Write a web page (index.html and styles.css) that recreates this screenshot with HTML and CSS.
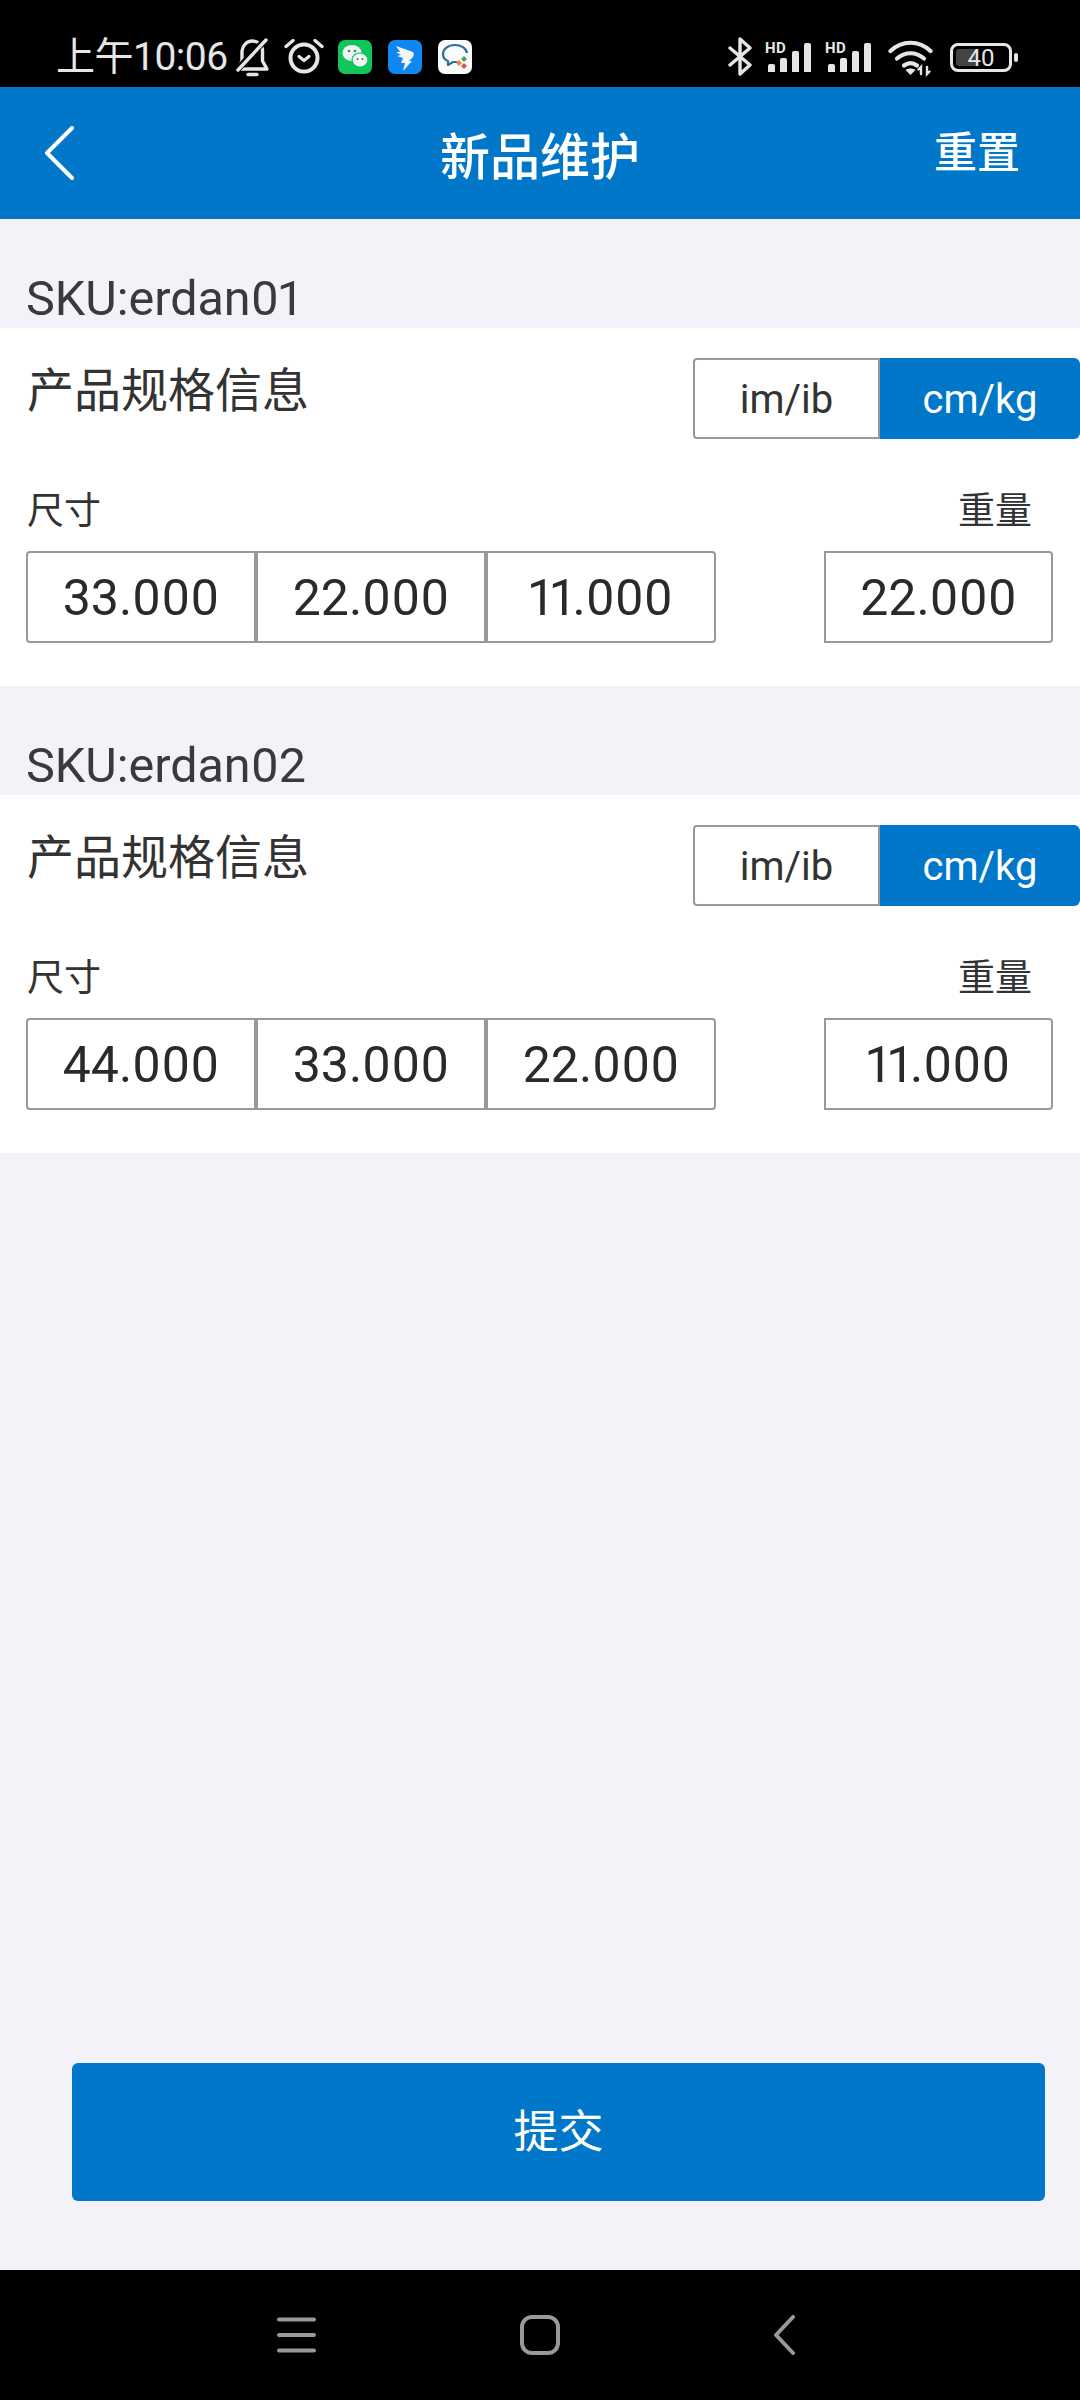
FILE: index.html
```html
<!DOCTYPE html>
<html lang="zh-CN">
<head>
<meta charset="utf-8">
<title>新品维护</title>
<link rel="stylesheet" href="styles.css">
</head>
<body>
<div class="phone">
  <div class="status">
    <span class="time">上午10:06</span>
    <svg class="i-bell" width="33" height="40" viewBox="0 0 33 40" fill="none" stroke="#e6e6e6" stroke-width="3.4" stroke-linecap="round" stroke-linejoin="round">
      <path d="M2 32h29l-4.500-8V14C26.500 8 22 4 16.500 4 11 4 7 8 6 14v10z"/>
      <path d="M1 33L30 2" stroke="#000" stroke-width="6.500"/>
      <path d="M2 33L30 3"/>
      <path d="M12 37.500h9"/>
    </svg>
    <svg class="i-alarm" width="40" height="40" viewBox="0 0 40 40" fill="none" stroke="#e6e6e6" stroke-linecap="round" stroke-linejoin="round">
      <circle cx="20" cy="21" r="13.500" stroke-width="4"/>
      <path d="M2 9.500L9 3.500M38 9.500L31 3.500" stroke-width="3.400"/>
      <path d="M15 19.500l5 4 5-4" stroke-width="3.200"/>
    </svg>
    <svg class="i-app first" width="34" height="40" viewBox="0 0 34 40">
      <rect y="3" width="34" height="34" rx="7" fill="#10c55c"/>
      <ellipse cx="14" cy="16" rx="9.500" ry="8" fill="#f4f4f4"/>
      <ellipse cx="22" cy="23" rx="8" ry="7" fill="#f4f4f4" stroke="#10c55c" stroke-width="1.200"/>
      <circle cx="11" cy="14" r="1.300" fill="#3a8a5c"/><circle cx="17" cy="14" r="1.300" fill="#3a8a5c"/>
      <circle cx="19.500" cy="22" r="1.100" fill="#3a8a5c"/><circle cx="24.500" cy="22" r="1.100" fill="#3a8a5c"/>
    </svg>
    <svg class="i-app" width="34" height="40" viewBox="0 0 34 40">
      <rect y="3" width="34" height="34" rx="7" fill="#0f86f0"/>
      <path d="M8 9l17 6c1 1 1 3 0 5l-4 4h3l-9 10 2-8h-4l2-5-6-2 4-1-5-3 4 0z" fill="#f2f6fb"/>
    </svg>
    <svg class="i-app" width="34" height="40" viewBox="0 0 34 40">
      <rect y="3" width="34" height="34" rx="7" fill="#fbfbfb"/>
      <path d="M17 8C10 8 5 12 5 17c0 3 2 6 5 7v4l5-3h4" fill="none" stroke="#2d6f9f" stroke-width="2.200" stroke-linejoin="round"/>
      <path d="M17 8c6 0 11 3 12 8" fill="none" stroke="#2d6f9f" stroke-width="2.200"/>
      <path d="M26 19l3 3-3 3-3-3z" fill="#4aa564"/><path d="M21 23l3 3-3 3-3-3z" fill="#e88a3a"/><path d="M26 26l3 3-3 3-3-3z" fill="#d9534f"/>
    </svg>
    <span class="spacer"></span>
    <svg width="25" height="40" viewBox="0 0 25 40" fill="none" stroke="#e6e6e6" stroke-width="3.400" stroke-linecap="round" stroke-linejoin="round">
      <path d="M2 11l20 17-10 9V2l10 9L2 28"/>
    </svg>
    <div class="signal">
      <span class="hd">HD</span>
      <span class="bars"><i class="b1"></i><i class="b2"></i><i class="b3"></i><i class="b4"></i></span>
    </div>
    <div class="signal">
      <span class="hd">HD</span>
      <span class="bars"><i class="b1"></i><i class="b2"></i><i class="b3"></i><i class="b4"></i></span>
    </div>
    <svg class="i-wifi" width="45" height="40" viewBox="0 0 45 40" fill="none" stroke="#e6e6e6" stroke-width="4.200" stroke-linecap="round">
      <path d="M2.500 14C14 3 31 3 42.500 14"/>
      <path d="M9 21.500c8-7 19-7 27 0"/>
      <path d="M16 28.500c4-3 9-3 13 0"/>
      <path d="M22.500 38l-5-5c3-2 7-2 10 0z" fill="#e6e6e6" stroke="none"/>
      <path d="M33 37v-7l-2.500 2.500M39 30v7l2.500-2.500" stroke-width="2.400"/>
    </svg>
    <div class="battery">
      <div class="cell"><span class="level"></span><span class="pct">40</span></div>
      <span class="tip"></span>
    </div>
  </div>

  <header class="header">
    <svg class="back" width="29" height="54" viewBox="0 0 29 54" fill="none" stroke="#fff" stroke-width="4" stroke-linecap="round" stroke-linejoin="round">
      <path d="M27 2L2 27l25 25"/>
    </svg>
    <h1 class="title">新品维护</h1>
    <span class="reset">重置</span>
  </header>

  <main class="content">
    <section class="item">
      <div class="sku">SKU:erdan01</div>
      <div class="card">
        <div class="card-top">
          <div class="card-title">产品规格信息</div>
          <div class="toggle"><span class="opt">im/ib</span><span class="opt on">cm/kg</span></div>
        </div>
        <div class="labels"><span>尺寸</span><span>重量</span></div>
        <div class="fields">
          <div class="group">
            <div class="box">33.000</div><div class="box">22.000</div><div class="box">11.000</div>
          </div>
          <div class="box solo">22.000</div>
        </div>
      </div>
    </section>
    <section class="item">
      <div class="sku">SKU:erdan02</div>
      <div class="card">
        <div class="card-top">
          <div class="card-title">产品规格信息</div>
          <div class="toggle"><span class="opt">im/ib</span><span class="opt on">cm/kg</span></div>
        </div>
        <div class="labels"><span>尺寸</span><span>重量</span></div>
        <div class="fields">
          <div class="group">
            <div class="box">44.000</div><div class="box">33.000</div><div class="box">22.000</div>
          </div>
          <div class="box solo">11.000</div>
        </div>
      </div>
    </section>
    <div class="foot"><button class="submit" type="button">提交</button></div>
  </main>

  <nav class="nav">
    <svg width="39" height="40" viewBox="0 0 39 40" fill="none" stroke="#999" stroke-width="4" stroke-linecap="round">
      <path d="M2 4.500h35M2 20h35M2 35.500h35"/>
    </svg>
    <svg width="40" height="40" viewBox="0 0 40 40" fill="none" stroke="#999" stroke-width="4">
      <rect x="2" y="2" width="36" height="36" rx="10"/>
    </svg>
    <svg width="21" height="40" viewBox="0 0 21 40" fill="none" stroke="#999" stroke-width="4" stroke-linecap="round" stroke-linejoin="round">
      <path d="M19 2L2 20l17 18"/>
    </svg>
  </nav>
</div>
</body>
</html>
```
FILE: styles.css
```css
* { box-sizing: border-box; }
html, body { margin: 0; padding: 0; }
body { font-family: "Roboto", "Noto Sans CJK SC", sans-serif; color: #333; }
.phone { width: 1080px; height: 2400px; display: flex; flex-direction: column; background: #f2f2f8; overflow: hidden; }

.status { height: 87px; background: #000; display: flex; align-items: flex-start; padding: 38px 0 0 56px; flex: none; }
.time { font-size: 39px; line-height: 38px; color: #e6e6e6; width: 170px; white-space: nowrap; letter-spacing: -0.5px; }
.status svg { display: block; flex: none; margin-top: -1px; }
.i-bell { margin-left: 10px; }
.i-alarm { margin-left: 15px; }
.i-app { margin-left: 16px; }
.i-app.first { margin-left: 14px; }
.spacer { flex: 1; }
.signal { position: relative; width: 50px; height: 40px; margin: -1px 0 0 12px; }
.signal + .signal { margin-left: 10px; }
.hd { position: absolute; left: 0; top: 4px; font-size: 15px; line-height: 15px; font-weight: 700; color: #e6e6e6; letter-spacing: 0.5px; }
.bars { position: absolute; left: 3px; bottom: 5px; display: flex; align-items: flex-end; gap: 5px; }
.bars i { display: block; width: 7px; background: #e6e6e6; border-radius: 2px 2px 0 0; }
.b1 { height: 8px; }
.b2 { height: 14px; }
.b3 { height: 21px; }
.b4 { height: 29px; }
.i-wifi { margin-left: 13px; }
.battery { display: flex; align-items: center; margin: 5px 62px 0 17px; height: 29px; }
.cell { position: relative; width: 62px; height: 29px; border: 3px solid #e6e6e6; border-radius: 8px; display: flex; align-items: center; justify-content: center; }
.level { position: absolute; left: 3px; top: 3px; bottom: 3px; width: 22px; background: #444; border-radius: 3px; }
.pct { position: relative; font-size: 24px; line-height: 24px; color: #e6e6e6; }
.tip { width: 4px; height: 9px; margin-left: 2px; background: #e6e6e6; border-radius: 2px; }

.header { height: 132px; background: #0077c8; flex: none; display: flex; align-items: center; justify-content: space-between; position: relative; padding: 0 60px 0 45px; color: #fff; }
.back { display: block; }
.title { position: absolute; left: 0; right: 0; margin: 0; text-align: center; font-size: 50px; line-height: 60px; font-weight: 500; top: 41px; pointer-events: none; }
.reset { font-size: 43px; line-height: 50px; font-weight: 500; margin-top: 0; }

.content { flex: 1; display: flex; flex-direction: column; min-height: 0; }
.sku { height: 109px; padding: 52px 0 0 26px; font-size: 48.5px; line-height: 56px; color: #3a3a3c; white-space: nowrap; font-variant-numeric: proportional-nums; }
.card { height: 358px; background: #fff; padding: 0 27px 0 26px; }
.card-top { display: flex; justify-content: space-between; height: 142px; padding-top: 33px; margin-right: -27px; }
.card-title { font-size: 47px; line-height: 60px; color: #333; padding: 0 0 0 1px; }
.toggle { display: flex; height: 81px; width: 387px; margin-top: -3px; }
.opt { display: flex; align-items: center; justify-content: center; font-size: 40px; line-height: 46px; color: #333; width: 187px; padding-top: 2px; border: 2px solid #999; border-radius: 4px 0 0 4px; }
.opt.on { flex: 1; width: auto; background: #0077c8; border: 0; color: #fff; border-radius: 0 6px 6px 0; }
.labels { display: flex; justify-content: space-between; font-size: 37px; line-height: 44px; height: 81px; padding: 20px 21px 0 1px; color: #333; }
.fields { display: flex; justify-content: space-between; }
.group { display: flex; }
.box { width: 230px; height: 92px; border: 2px solid #999; padding-top: 2px; display: flex; align-items: center; justify-content: center; font-size: 50px; line-height: 60px; color: #2a2a2a; background: #fff; font-variant-numeric: proportional-nums; }
.group .box:first-child { border-radius: 4px 0 0 4px; }
.group .box:last-child { border-radius: 0 4px 4px 0; }
.box.solo { width: 229px; border-radius: 0 4px 4px 0; }

.foot { margin-top: auto; padding: 0 35px 69px 72px; }
.submit { display: block; width: 100%; height: 138px; background: #0077c8; color: #fff; border: 0; border-radius: 6px; font-family: inherit; font-size: 45px; line-height: 50px; padding: 2px 0 0; }

.nav { height: 130px; background: #000; flex: none; display: flex; align-items: flex-start; padding: 45px 0 0 277px; }
.nav svg { display: block; flex: none; }
.nav svg:nth-child(2) { margin-left: 204px; }
.nav svg:nth-child(3) { margin-left: 214px; }
```
